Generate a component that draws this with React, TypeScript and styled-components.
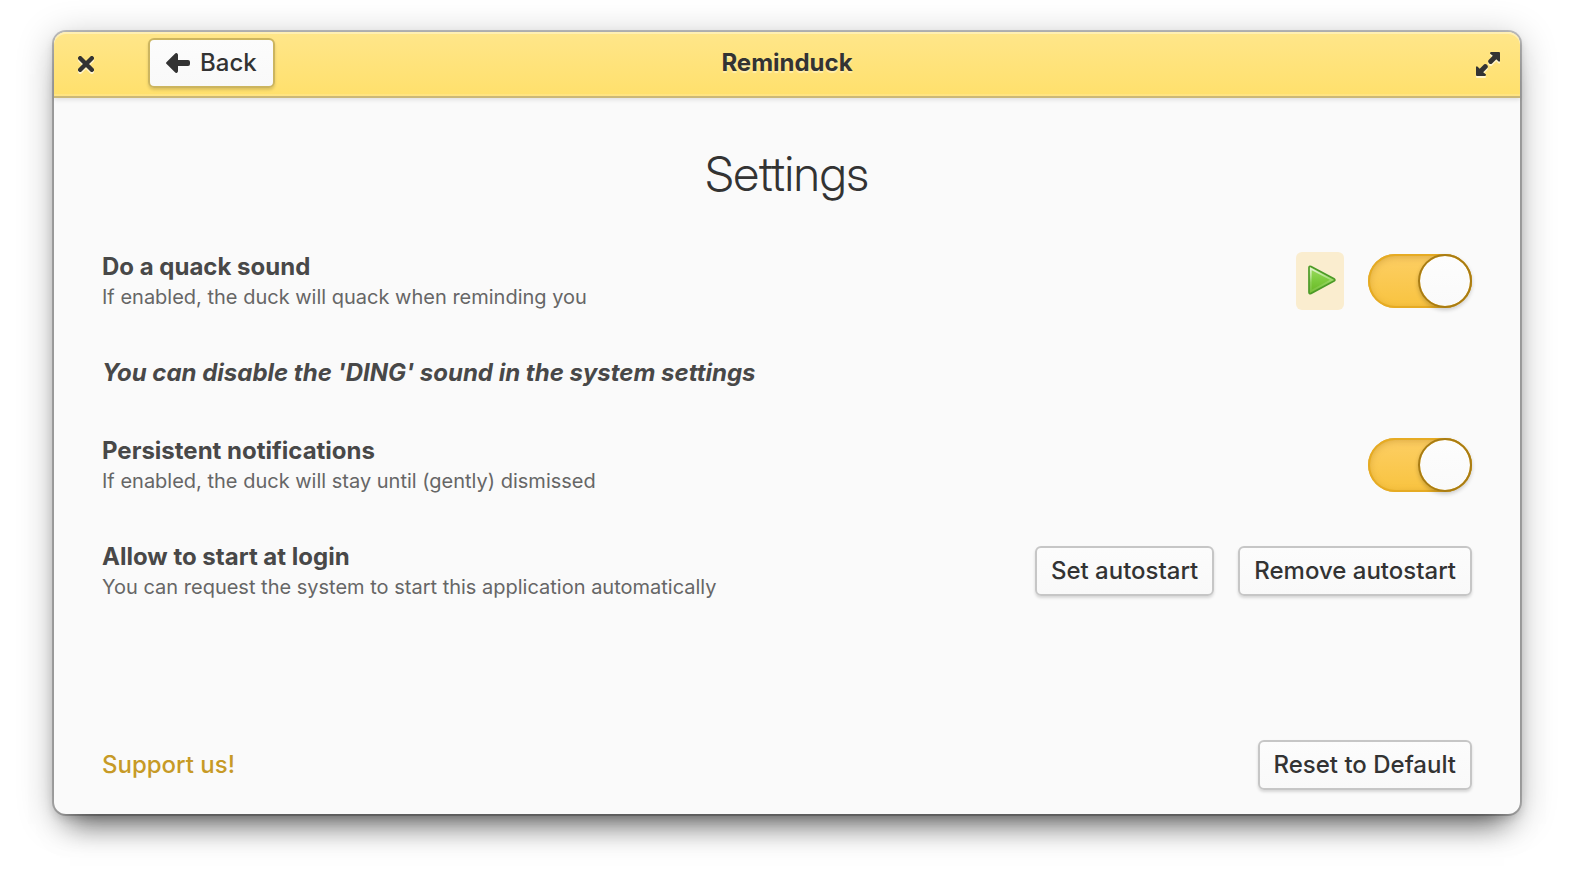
import React, { useState } from 'react';
import styled, { createGlobalStyle } from 'styled-components';

const GlobalStyle = createGlobalStyle`
  *, *::before, *::after { box-sizing: border-box; }
  body {
    margin: 0;
    background: #fff;
    color: #333;
    font-family: Inter, "Liberation Sans", sans-serif;
    font-size: 24px;
    line-height: 30px;
  }
  h1, h2, p { margin: 0; }
`;

const Desktop = styled.div`
  display: flex;
  min-height: 100vh;
  padding: 32px 54px 80px;
`;

const AppWindow = styled.main`
  flex: 1;
  display: flex;
  flex-direction: column;
  min-width: 0;
  border-radius: 12px;
  background: #fafafa;
  box-shadow:
    0 0 0 2px rgba(0, 0, 0, 0.22),
    0 4px 10px rgba(0, 0, 0, 0.15),
    0 26px 28px -16px rgba(0, 0, 0, 0.5),
    0 6px 36px rgba(0, 0, 0, 0.25);
`;

const HeaderBar = styled.header`
  display: grid;
  grid-template-columns: 1fr auto 1fr;
  align-items: center;
  height: 66px;
  padding: 0 16px;
  border-bottom: 2px solid #cbb878;
  border-radius: 12px 12px 0 0;
  background: linear-gradient(#ffe68a, #ffe06c);
  box-shadow:
    inset 0 2px 0 rgba(255, 255, 255, 0.35),
    inset 0 -2px 0 rgba(255, 255, 255, 0.15),
    0 2px 4px rgba(0, 0, 0, 0.1);
`;

const HeaderStart = styled.div`
  display: flex;
  align-items: center;
  gap: 46px;
`;

const WindowTitle = styled.h1`
  font-size: 24px;
  font-weight: 700;
  line-height: 32px;
  padding-bottom: 2px;
  text-shadow: 0 2px 1px rgba(255, 255, 255, 0.4);
`;

const WindowButton = styled.button<{ $end?: boolean }>`
  display: flex;
  align-items: center;
  justify-content: center;
  justify-self: ${({ $end }) => ($end ? 'end' : 'start')};
  width: 32px;
  height: 32px;
  padding: 0;
  border: 0;
  background: none;
  color: #333;
  filter: drop-shadow(0 2px 0 rgba(255, 255, 255, 0.6));
`;

const Button = styled.button<{ $onHeader?: boolean }>`
  display: flex;
  align-items: center;
  gap: 10px;
  height: 50px;
  margin: ${({ $onHeader }) => ($onHeader ? '0 0 2px' : '0')};
  padding: 0 ${({ $onHeader }) => ($onHeader ? '16px' : '14px')};
  border: 2px solid ${({ $onHeader }) => ($onHeader ? '#ccb55f' : '#c6c6c6')};
  border-radius: 6px;
  background: linear-gradient(#fcfcfc, #f9f9f9);
  box-shadow: 0 2px 3px rgba(0, 0, 0, 0.14);
  color: #333;
  font: inherit;
  font-weight: 500;
  white-space: nowrap;
`;

const Content = styled.div`
  flex: 1;
  display: flex;
  flex-direction: column;
  padding: 46px 48px 24px;
`;

const PageTitle = styled.h2`
  font-family: "Inter Display", Inter, "Liberation Sans", sans-serif;
  font-size: 48px;
  font-weight: 300;
  line-height: 60px;
  text-align: center;
`;

const SettingsList = styled.div`
  display: flex;
  flex-direction: column;
  gap: 48px;
  margin: 48px 0;
`;

const SettingRow = styled.div`
  display: flex;
  align-items: center;
  justify-content: space-between;
  gap: 24px;
`;

const SettingText = styled.div`
  display: flex;
  flex-direction: column;
  gap: 2px;
`;

const SettingName = styled.label`
  color: #484848;
  font-weight: 700;
`;

const SettingHint = styled.p`
  color: #666;
  font-size: 20px;
  line-height: 26px;
`;

const Note = styled.p`
  color: #484848;
  font-style: italic;
  font-weight: 700;
`;

const Controls = styled.div`
  display: flex;
  align-items: center;
  gap: 24px;
`;

const PlayButton = styled.button`
  display: flex;
  align-items: center;
  justify-content: center;
  width: 48px;
  height: 58px;
  padding: 0 0 0 4px;
  border: 0;
  border-radius: 6px;
  background: #faedcf;
`;

const Switch = styled.input`
  appearance: none;
  display: flex;
  width: 104px;
  height: 54px;
  margin: 0;
  border-radius: 27px;
  background: linear-gradient(#fdcf65, #f8c33f);
  box-shadow:
    inset 0 0 0 2px #e6ab23,
    inset 0 2px 8px rgba(150, 95, 0, 0.4);

  &::before {
    content: '';
    width: 54px;
    height: 54px;
    border: 2px solid #a87c14;
    border-radius: 50%;
    background: linear-gradient(#fdfdfd, #fafafa);
    background-clip: padding-box;
    box-shadow: 0 2px 4px rgba(0, 0, 0, 0.2);
  }

  &:checked::before { margin-left: auto; }
  &:not(:checked) { background: #d4d4d4; }
`;

const Footer = styled.footer`
  display: flex;
  align-items: center;
  justify-content: space-between;
  margin-top: auto;
`;

const SupportLink = styled.a`
  color: #c79a26;
  font-weight: 500;
  text-decoration: none;
`;

const CloseIcon = () => (
  <svg width="16" height="16" viewBox="0 0 16 16" aria-hidden="true">
    <path d="M2.2 2.2 13.8 13.8M13.8 2.2 2.2 13.8" fill="none" stroke="currentColor" strokeWidth="4.4" strokeLinecap="round" />
  </svg>
);

const BackIcon = () => (
  <svg width="24" height="20" viewBox="0 0 24 20" aria-hidden="true">
    <path d="M.4 9.2 9.2.4Q10-.3 11 .2 12 .7 12 2V7H22Q24 7 24 9V11Q24 13 22 13H12V18Q12 19.3 11 19.8 10 20.3 9.2 19.6L.4 10.8Q-.3 10 .4 9.2Z" fill="currentColor" />
  </svg>
);

const ExpandIcon = () => (
  <svg width="24" height="24" viewBox="0 0 24 24" fill="currentColor" aria-hidden="true">
    <path d="M15 0H23Q24 0 24 1V9.5H22.6L20.3 7.2 15.8 11.7Q14.4 12.6 13 11.2 11.5 9.7 12.4 8.2L16.8 3.7 14 1.6V.8Z" />
    <path d="M9 24H1Q0 24 0 23V14.5H1.4L3.7 16.8 8.2 12.3Q9.6 11.4 11 12.8 12.5 14.3 11.6 15.8L7.2 20.3 10 22.4V23.2Z" />
  </svg>
);

const PlayIcon = () => (
  <svg width="30" height="32" viewBox="0 0 30 32" aria-hidden="true">
    <defs>
      <linearGradient id="play-fill" x1="0" y1="0" x2="0" y2="1">
        <stop offset="0" stopColor="#9fdc62" />
        <stop offset="0.5" stopColor="#7dcb3e" />
        <stop offset="1" stopColor="#68b723" />
      </linearGradient>
      <linearGradient id="play-shine" x1="0" y1="0" x2="0" y2="1">
        <stop offset="0" stopColor="#fff" stopOpacity="0.7" />
        <stop offset="0.6" stopColor="#fff" stopOpacity="0.15" />
        <stop offset="1" stopColor="#fff" stopOpacity="0.1" />
      </linearGradient>
    </defs>
    <path d="M2 2.7Q2 .7 4 1.5L27 13.7Q28.8 14.9 27 16.1L4 28.5Q2 29.3 2 27.3Z" fill="url(#play-fill)" stroke="#4c9a28" strokeWidth="1.7" strokeLinejoin="round" />
    <path d="M3.8 3.7V26.3L25 14.9Z" fill="none" stroke="url(#play-shine)" strokeWidth="1.8" />
  </svg>
);

export default function App() {
  const [quack, setQuack] = useState(true);
  const [persistent, setPersistent] = useState(true);

  return (
    <>
      <GlobalStyle />
      <Desktop>
        <AppWindow>
          <HeaderBar>
            <HeaderStart>
              <WindowButton type="button" aria-label="Close"><CloseIcon /></WindowButton>
              <Button type="button" $onHeader><BackIcon />Back</Button>
            </HeaderStart>
            <WindowTitle>Reminduck</WindowTitle>
            <WindowButton type="button" aria-label="Maximize" $end><ExpandIcon /></WindowButton>
          </HeaderBar>
          <Content>
            <PageTitle>Settings</PageTitle>
            <SettingsList>
              <SettingRow>
                <SettingText>
                  <SettingName htmlFor="quack">Do a quack sound</SettingName>
                  <SettingHint>If enabled, the duck will quack when reminding you</SettingHint>
                </SettingText>
                <Controls>
                  <PlayButton type="button" aria-label="Play sound"><PlayIcon /></PlayButton>
                  <Switch id="quack" type="checkbox" role="switch" checked={quack} onChange={(e) => setQuack(e.target.checked)} />
                </Controls>
              </SettingRow>
              <Note>You can disable the 'DING' sound in the system settings</Note>
              <SettingRow>
                <SettingText>
                  <SettingName htmlFor="persistent">Persistent notifications</SettingName>
                  <SettingHint>If enabled, the duck will stay until (gently) dismissed</SettingHint>
                </SettingText>
                <Switch id="persistent" type="checkbox" role="switch" checked={persistent} onChange={(e) => setPersistent(e.target.checked)} />
              </SettingRow>
              <SettingRow>
                <SettingText>
                  <SettingName as="span" id="autostart-name">Allow to start at login</SettingName>
                  <SettingHint>You can request the system to start this application automatically</SettingHint>
                </SettingText>
                <Controls role="group" aria-labelledby="autostart-name">
                  <Button type="button">Set autostart</Button>
                  <Button type="button">Remove autostart</Button>
                </Controls>
              </SettingRow>
            </SettingsList>
            <Footer>
              <SupportLink href="#support">Support us!</SupportLink>
              <Button type="button">Reset to Default</Button>
            </Footer>
          </Content>
        </AppWindow>
      </Desktop>
    </>
  );
}
